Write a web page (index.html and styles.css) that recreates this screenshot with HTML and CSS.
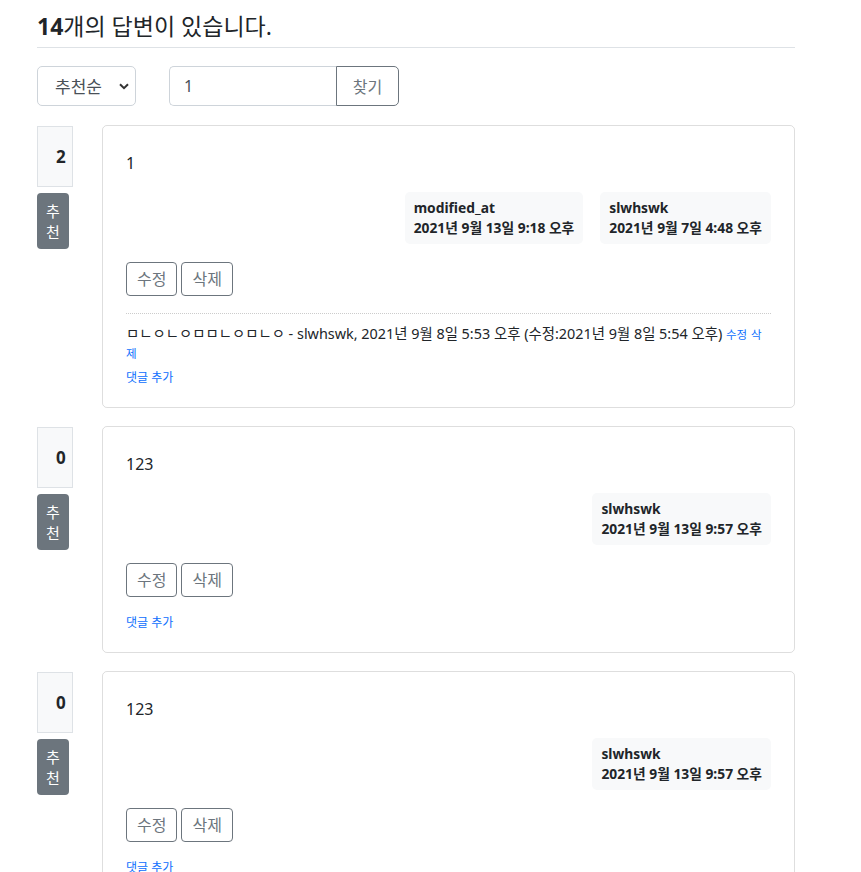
FILE: index.html
```html
<!DOCTYPE html>
<html lang="ko">
<head>
<meta charset="utf-8">
<title>답변</title>
<link rel="stylesheet" href="styles.css">
</head>
<body>
<div class="container">
  <h4 class="answer-count"><strong>14</strong>개의 답변이 있습니다.</h4>
  <div class="toolbar">
    <div class="sort-wrap">
      <select class="sort"><option>추천순</option><option>최신순</option></select>
      <svg class="chev" width="10" height="7" viewBox="0 0 10 7"><path d="M1 1.2 L5 5.2 L9 1.2" fill="none" stroke="#333" stroke-width="2"/></svg>
    </div>
    <div class="search">
      <input class="search-input" type="text" value="1">
      <button class="search-btn" type="button">찾기</button>
    </div>
  </div>

  <div class="answer">
    <div class="vote">
      <div class="vote-count">2</div>
      <a class="btn-recommend">추천</a>
    </div>
    <div class="card">
      <div class="card-text">1</div>
      <div class="meta">
        <div class="badge badge-mod"><div class="badge-top">modified_at</div><div>2021년 9월 13일 9:18 오후</div></div>
        <div class="badge"><div class="badge-top">slwhswk</div><div>2021년 9월 7일 4:48 오후</div></div>
      </div>
      <div class="actions"><a class="btn-outline">수정</a><a class="btn-outline">삭제</a></div>
      <div class="comments">
        <div class="comment"><span>ㅁㄴㅇㄴㅇㅁㅁㄴㅇㅁㄴㅇ</span><span> - slwhswk, 2021년 9월 8일 5:53 오후 (수정:2021년 9월 8일 5:54 오후) </span><a class="link-small">수정</a> <a class="link-small">삭제</a></div>
        <a class="add-comment">댓글 추가</a>
      </div>
    </div>
  </div>

  <div class="answer">
    <div class="vote">
      <div class="vote-count">0</div>
      <a class="btn-recommend">추천</a>
    </div>
    <div class="card">
      <div class="card-text">123</div>
      <div class="meta">
        <div class="badge"><div class="badge-top">slwhswk</div><div>2021년 9월 13일 9:57 오후</div></div>
      </div>
      <div class="actions"><a class="btn-outline">수정</a><a class="btn-outline">삭제</a></div>
      <div class="comments">
        <a class="add-comment">댓글 추가</a>
      </div>
    </div>
  </div>

  <div class="answer">
    <div class="vote">
      <div class="vote-count">0</div>
      <a class="btn-recommend">추천</a>
    </div>
    <div class="card">
      <div class="card-text">123</div>
      <div class="meta">
        <div class="badge"><div class="badge-top">slwhswk</div><div>2021년 9월 13일 9:57 오후</div></div>
      </div>
      <div class="actions"><a class="btn-outline">수정</a><a class="btn-outline">삭제</a></div>
      <div class="comments">
        <a class="add-comment">댓글 추가</a>
      </div>
    </div>
  </div>
</div>
</body>
</html>
```

FILE: styles.css
```css
* { box-sizing: border-box; }
html, body { margin: 0; padding: 0; background: #fff; }
body {
  font-family: "Noto Sans", "Noto Sans CJK KR", sans-serif;
  font-size: 16px;
  line-height: 1.5;
  color: #212529;
}
.container {
  width: 758px;
  margin-left: 37px;
}
.answer-count {
  margin: 0;
  padding: 12px 0 7px;
  font-size: 23px;
  font-weight: 400;
  line-height: 28px;
  border-bottom: 1px solid #dee2e6;
}
.answer-count strong { font-weight: 700; }

.toolbar {
  display: flex;
  align-items: center;
  margin-top: 18px;
  height: 40px;
}
.sort-wrap {
  position: relative;
  width: 99px;
  height: 40px;
}
.sort {
  appearance: none;
  -webkit-appearance: none;
  width: 100%;
  height: 100%;
  border: 1px solid #ced4da;
  border-radius: 5px;
  background: #fff;
  color: #495057;
  font-family: inherit;
  font-size: 17px;
  padding: 0 0 0 17px;
}
.chev {
  position: absolute;
  right: 7px;
  top: 17px;
}
.search {
  display: flex;
  margin-left: 33px;
  height: 40px;
}
.search-input {
  width: 167px;
  height: 40px;
  border: 1px solid #ced4da;
  border-right: none;
  border-radius: 5px 0 0 5px;
  padding: 0 14px;
  font-family: inherit;
  font-size: 16px;
  color: #495057;
  outline: none;
}
.search-btn {
  width: 63px;
  height: 40px;
  border: 1px solid #6c757d;
  border-radius: 0 5px 5px 0;
  background: #fff;
  color: #6c757d;
  font-family: inherit;
  font-size: 16px;
  padding: 0;
}

.answer {
  display: flex;
  align-items: flex-start;
  margin-top: 19px;
}
.answer + .answer {
  margin-top: 18px;
}
.vote {
  width: 36px;
  flex: none;
  margin-right: 29px;
  padding-top: 1px;
}
.vote-count {
  height: 61px;
  border: 1px solid #dee2e6;
  background: #f8f9fa;
  font-weight: 700;
  font-size: 17px;
  line-height: 59px;
  padding-left: 18px;
}
.btn-recommend {
  display: block;
  width: 32px;
  margin-top: 6px;
  padding: 8px 8px 6px;
  background: #6c757d;
  color: #fff;
  border-radius: 4px;
  font-size: 15px;
  line-height: 21px;
  text-align: center;
  word-break: break-all;
}

.card {
  flex: 1;
  border: 1px solid rgba(0, 0, 0, 0.13);
  border-radius: 5px;
  padding: 25px 23px 20px 23px;
}
.card-text {
  line-height: 24px;
}
.meta {
  display: flex;
  justify-content: flex-end;
  margin-top: 17px;
}
.badge {
  background: #f8f9fa;
  border-radius: 5px;
  padding: 8px 9px 8px;
  font-size: 13.8px;
  font-weight: 700;
  line-height: 16px;
}
.badge-top { margin-bottom: 4px; }
.badge-mod { margin-right: 17px; }

.actions {
  display: flex;
  gap: 4px;
  margin-top: 18px;
}
.btn-outline {
  display: block;
  height: 34px;
  padding: 0 10px;
  border: 1px solid #6c757d;
  border-radius: 4px;
  color: #6c757d;
  font-size: 16px;
  line-height: 32px;
}
.comments {
  margin-top: 17px;
}
.comment {
  border-top: 1px dotted #ccc;
  padding: 11px 0 6px;
  font-size: 14.4px;
  line-height: 18px;
}
.link-small {
  color: #0d6efd;
  font-size: 11.5px;
}
.add-comment {
  display: block;
  color: #0d6efd;
  font-size: 12px;
  line-height: 18px;
}
```
